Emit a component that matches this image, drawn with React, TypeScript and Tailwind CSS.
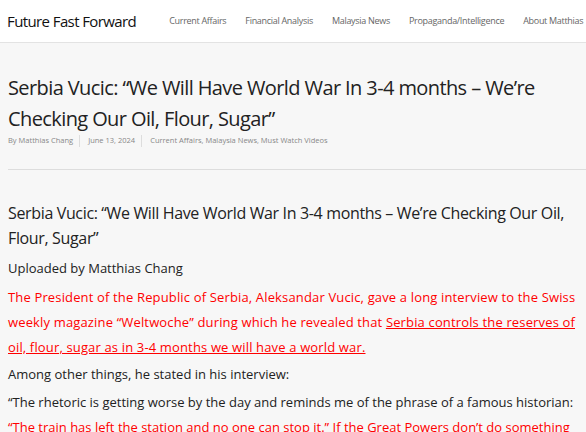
export default function App() {
  const nav = ["Current Affairs", "Financial Analysis", "Malaysia News", "Propaganda/Intelligence", "About Matthias"];
  return (
    <div className="min-h-[432px] bg-[#f7f7f7] text-[#222] font-['Open_Sans',sans-serif] overflow-hidden">
      <header className="h-[43px] bg-white border-b border-[#e3e3e3] flex items-center pl-[7px]">
        <div className="text-[15px] tracking-[-0.6px] text-[#111] whitespace-nowrap">Future Fast Forward</div>
        <nav className="ml-[33px] flex gap-[19px] text-[9px] tracking-[-0.3px] text-[#666]">
          {nav.map((n) => (
            <span key={n} className="whitespace-nowrap">{n}</span>
          ))}
        </nav>
      </header>

      <div className="pl-2">
        <h1 className="mt-[29px] text-[20px] leading-[31px] tracking-[-0.6px] text-[#222] w-[540px]">
          Serbia Vucic: “We Will Have World War In 3-4 months – We’re Checking Our Oil, Flour, Sugar”
        </h1>
        <div className="mt-[1px] flex items-center text-[7.5px] text-[#888]">
          <span>By Matthias Chang</span>
          <span className="ml-[6px] mr-[8px] h-[12px] border-l border-[#ddd]"></span>
          <span>June 13, 2024</span>
          <span className="ml-[6px] mr-[8px] h-[12px] border-l border-[#ddd]"></span>
          <span>Current Affairs, Malaysia News, Must Watch Videos</span>
        </div>
        <div className="mt-[22px] border-t border-[#ddd]"></div>

        <div className="pt-[31px] w-[576px]">
          <h2 className="text-[16px] leading-[25px] tracking-[-0.35px] text-[#222] w-[574px]">
            Serbia Vucic: “We Will Have World War In 3-4 months – We’re Checking Our Oil, Flour, Sugar”
          </h2>
          <p className="mt-[5px] text-[13px] leading-[25px]">Uploaded by Matthias Chang</p>
          <p className="mt-[4px] text-[13px] leading-[25px] tracking-[0.15px] text-[#ff0000] w-[574px]">
            The President of the Republic of Serbia, Aleksandar Vucic, gave a long interview to the Swiss weekly magazine
            “Weltwoche” during which he revealed that{" "}
            <span className="underline">Serbia controls the reserves of oil, flour, sugar as in 3-4 months we will have a world war.</span>
          </p>
          <p className="mt-[2px] text-[13px] leading-[25px]">Among other things, he stated in his interview:</p>
          <p className="mt-[3px] text-[13px] leading-[25px]">
            “The rhetoric is getting worse by the day and reminds me of the phrase of a famous historian:
            <br />
            <span className="text-[#ff0000] underline">“The train has left the station and no one can stop it.”</span>{" "}
            <span className="text-[#ff0000]">If the Great Powers don’t do something</span>
          </p>
        </div>
      </div>
    </div>
  );
}
